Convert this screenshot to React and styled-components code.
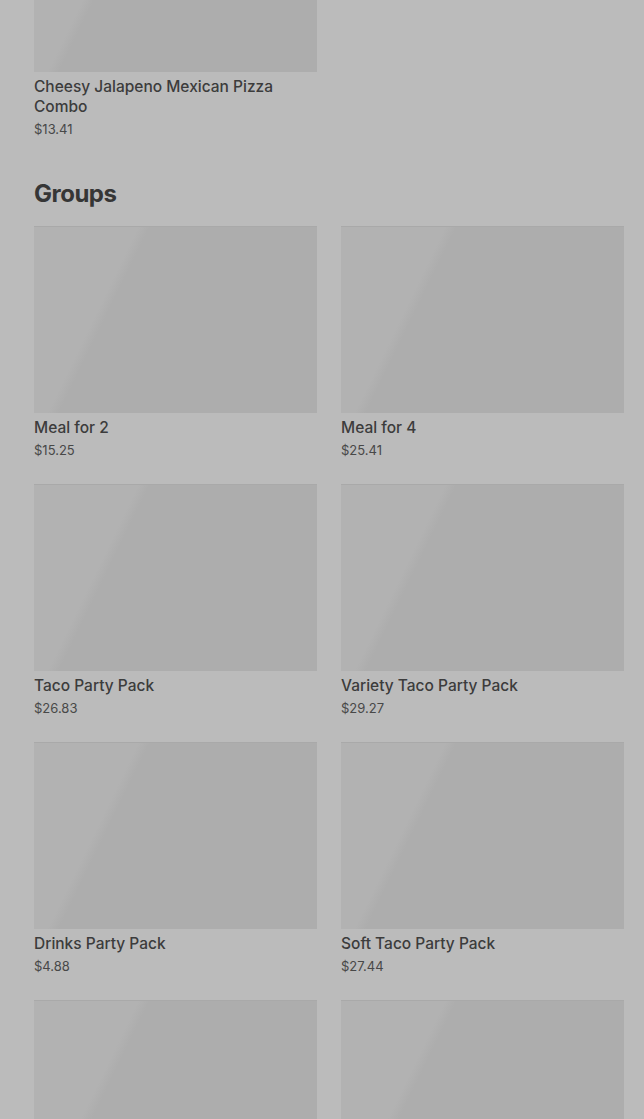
import React from 'react'
import styled, { createGlobalStyle } from 'styled-components';

const GlobalStyle = createGlobalStyle`
    body {
        margin: 0;
        background: #bbbbbb;
        font-family: Inter, Roboto, "Liberation Sans", sans-serif;
    }
`;

const Page = styled.div`
    padding: 0 20px 0 34px;
    overflow: hidden;
    height: 1119px;
`;

const Scroller = styled.div`
    margin-top: -115px;
`;

const Section = styled.section`
    margin-bottom: 39px;
`;

const Heading = styled.h2`
    margin: 0 0 16px;
    font-size: 24px;
    line-height: 32px;
    font-weight: 700;
    color: #363636;
    letter-spacing: -0.5px;
`;

const Grid = styled.div`
    display: grid;
    grid-template-columns: 283px 283px;
    column-gap: 24px;
    row-gap: 24px;
`;

const Card = styled.div`
    display: flex;
    flex-direction: column;
`;

const Thumb = styled.div`
    height: 187px;
    background: linear-gradient(116deg, #b2b2b2 0, #b2b2b2 ${p => p.$shine}%, #adadad ${p => p.$shine + 3}%, #adadad 100%);
    box-shadow: inset 0 1px 0 #a9a9a9;
`;

const Title = styled.div`
    margin-top: 5px;
    font-size: 15.5px;
    line-height: 20px;
    font-weight: 500;
    color: #3c3c3c;
    padding-right: 30px;
`;

const Price = styled.div`
    font-size: 13px;
    line-height: 20px;
    margin-top: 2px;
    color: #484848;
`;

const groups = [
    { name: 'Meal for 2', price: '$15.25' },
    { name: 'Meal for 4', price: '$25.41' },
    { name: 'Taco Party Pack', price: '$26.83' },
    { name: 'Variety Taco Party Pack', price: '$29.27' },
    { name: 'Drinks Party Pack', price: '$4.88' },
    { name: 'Soft Taco Party Pack', price: '$27.44' },
    { name: '', price: '' },
    { name: '', price: '' },
];

function Item({ name, price }) {
    return (
        <Card>
            <Thumb $shine={28} />
            {name && <Title>{name}</Title>}
            {price && <Price>{price}</Price>}
        </Card>
    )
}

export default function App() {
    return (
        <Page>
            <GlobalStyle />
            <Scroller>
                <Section>
                    <Grid>
                        <Item name="Cheesy Jalapeno Mexican Pizza Combo" price="$13.41" />
                    </Grid>
                </Section>
                <Heading>Groups</Heading>
                <Grid>
                    {groups.map((g, i) => <Item key={i} {...g} />)}
                </Grid>
            </Scroller>
        </Page>
    )
}
